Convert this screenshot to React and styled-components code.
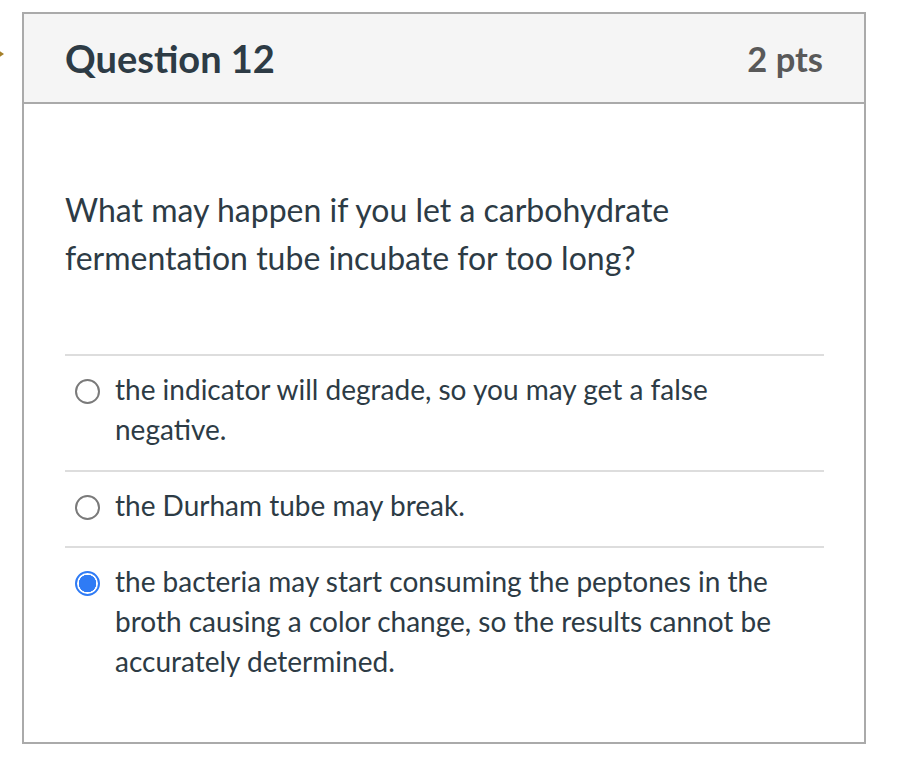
import React from 'react'
import styled, { createGlobalStyle } from 'styled-components'

const GlobalStyle = createGlobalStyle`
  body {
    margin: 0;
    background: #ffffff;
    font-family: Lato, "Noto Sans", sans-serif;
  }
`

const Page = styled.div`
  position: relative;
  padding: 12px 0 0 22px;
  width: 922px;
  height: 772px;
  box-sizing: border-box;
`

const Flag = styled.div`
  position: absolute;
  left: -5px;
  top: 48px;
  width: 0;
  height: 0;
  border-top: 6px solid transparent;
  border-bottom: 6px solid transparent;
  border-left: 9px solid #a5802a;
`

const Card = styled.div`
  width: 844px;
  height: 732px;
  box-sizing: border-box;
  border: 2px solid #aaaaaa;
  display: flex;
  flex-direction: column;
`

const Header = styled.div`
  display: flex;
  justify-content: space-between;
  align-items: center;
  height: 88px;
  padding: 0 41px;
  background: #f5f5f5;
  border-bottom: 2px solid #aaaaaa;
`

const Title = styled.h2`
  margin: 0;
  font-size: 38px;
  font-weight: 700;
  color: #2d3b45;
`

const Points = styled.div`
  font-size: 34.5px;
  font-weight: 700;
  color: #595959;
`

const Body = styled.div`
  padding: 82px 40px 0 41px;
`

const QuestionText = styled.p`
  margin: 0 0 72px;
  font-size: 32px;
  line-height: 48px;
  color: #2d3b45;
`

const AnswerList = styled.div`
  display: flex;
  flex-direction: column;
`

const Answer = styled.label`
  display: flex;
  align-items: flex-start;
  gap: 15px;
  padding: 13px 0 21px 10px;
  border-top: 2px solid #dddddd;
`

const Radio = styled.span`
  flex: none;
  width: 25px;
  height: 25px;
  margin-top: 10px;
  box-sizing: border-box;
  border-radius: 50%;
  border: ${p => (p.checked ? '2.5px solid #2f7bf5' : '2px solid #7a7a7a')};
  background: ${p => (p.checked ? 'radial-gradient(circle, #2f7bf5 0 8.5px, #ffffff 9px)' : '#ffffff')};
`

const AnswerText = styled.span`
  font-size: 28px;
  line-height: 40px;
  color: #2d3b45;
`

const answers = [
  { id: 1, text: 'the indicator will degrade, so you may get a false negative.', checked: false },
  { id: 2, text: 'the Durham tube may break.', checked: false },
  { id: 3, text: 'the bacteria may start consuming the peptones in the broth causing a color change, so the results cannot be accurately determined.', checked: true }
]

export default function App() {
  return (
    <Page>
      <GlobalStyle />
      <Flag />
      <Card>
        <Header>
          <Title>Question 12</Title>
          <Points>2 pts</Points>
        </Header>
        <Body>
          <QuestionText>
            What may happen if you let a carbohydrate<br />
            fermentation tube incubate for too long?
          </QuestionText>
          <AnswerList>
            {answers.map(a => (
              <Answer key={a.id}>
                <Radio checked={a.checked} />
                <AnswerText>{a.text}</AnswerText>
              </Answer>
            ))}
          </AnswerList>
        </Body>
      </Card>
    </Page>
  )
}
